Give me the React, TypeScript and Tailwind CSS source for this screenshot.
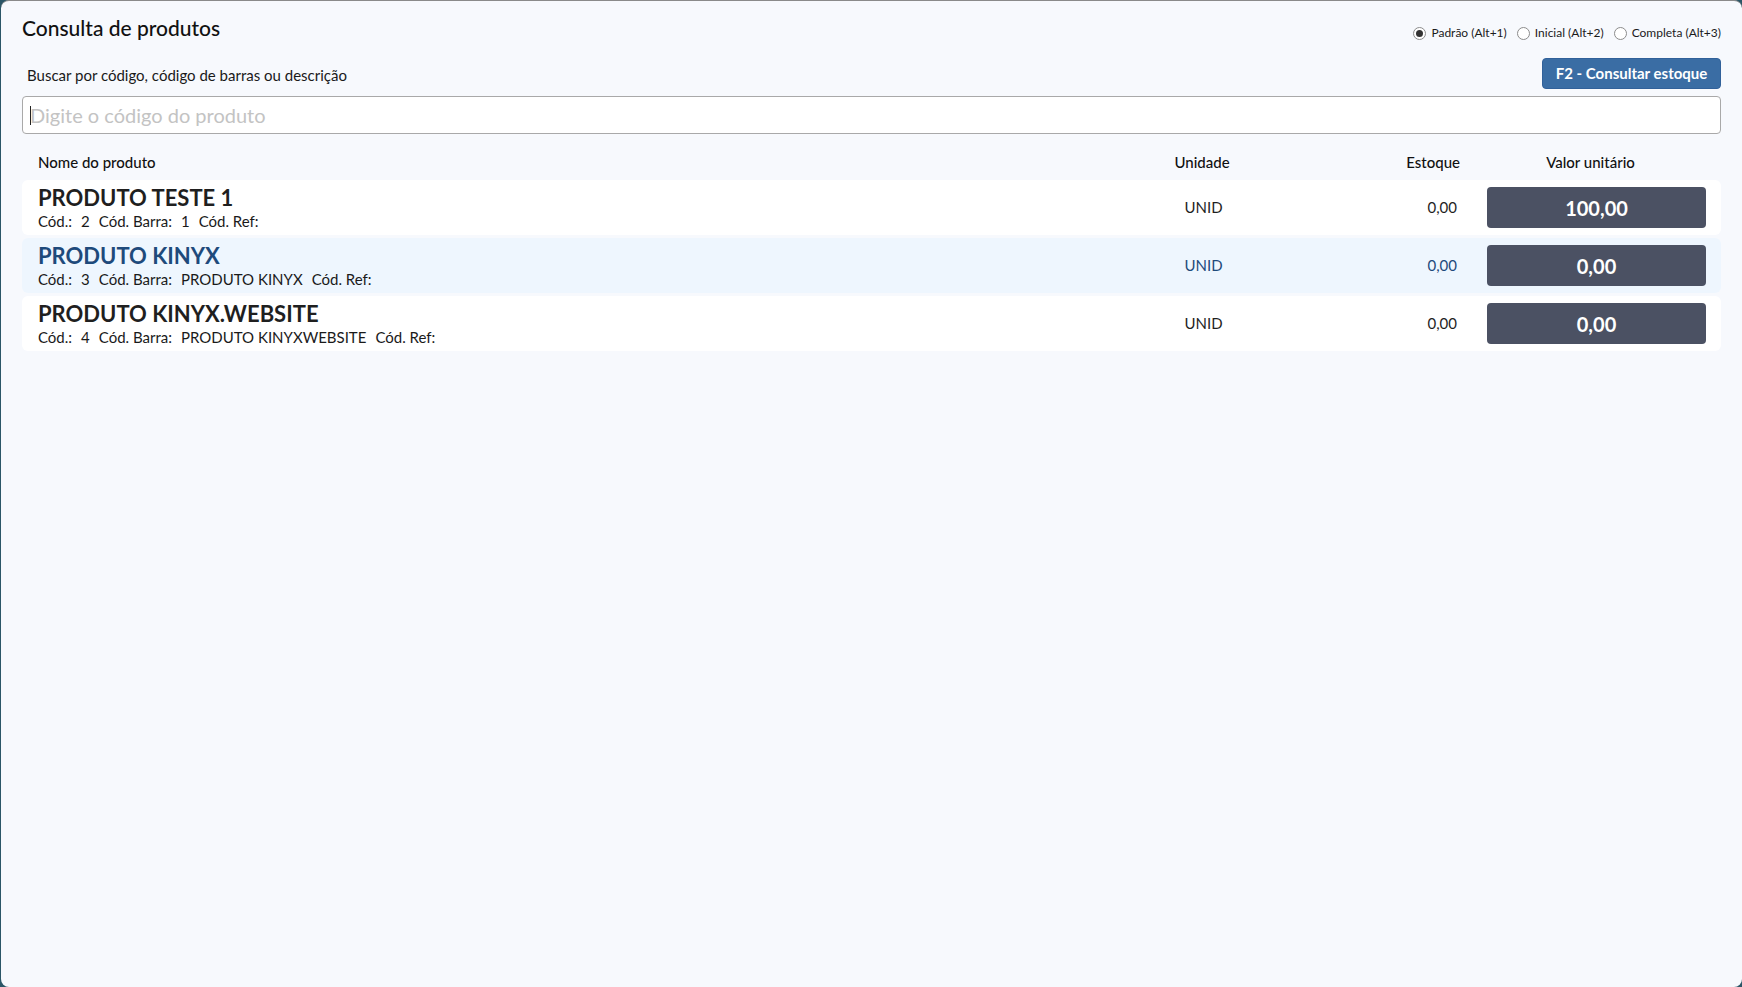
import React from 'react';

interface Produto {
  nome: string;
  cod: string;
  barra: string;
  ref: string;
  unidade: string;
  estoque: string;
  valor: string;
}

const produtos: Produto[] = [
  { nome: 'PRODUTO TESTE 1', cod: '2', barra: '1', ref: '', unidade: 'UNID', estoque: '0,00', valor: '100,00' },
  { nome: 'PRODUTO KINYX', cod: '3', barra: 'PRODUTO KINYX', ref: '', unidade: 'UNID', estoque: '0,00', valor: '0,00' },
  { nome: 'PRODUTO KINYX.WEBSITE', cod: '4', barra: 'PRODUTO KINYXWEBSITE', ref: '', unidade: 'UNID', estoque: '0,00', valor: '0,00' },
];

const Radio: React.FC<{ label: string; checked?: boolean }> = ({ label, checked }) => (
  <label className="flex items-center gap-[5px] text-[12px] text-[#1b1b1b]">
    <span className="w-[13px] h-[13px] rounded-full border border-[#8c8c8c] bg-white flex items-center justify-center">
      {checked && <span className="w-[7px] h-[7px] rounded-full bg-[#333]" />}
    </span>
    {label}
  </label>
);

const ProdutoRow: React.FC<{ p: Produto; selected?: boolean }> = ({ p, selected }) => (
  <div
    className={`h-[55px] rounded-[6px] flex items-center pl-4 pr-[15px] ${
      selected ? 'bg-[#eef6fe] text-[#1e4a7b]' : 'bg-white text-[#1f1f1f]'
    }`}
  >
    <div className="flex-1 flex flex-col">
      <span className="text-[22px] font-bold leading-[26px]">{p.nome}</span>
      <div className="flex gap-[9px] text-[15px] leading-[20px] text-[#1a1a1a]">
        <span>Cód.:</span>
        <span>{p.cod}</span>
        <span>Cód. Barra:</span>
        <span>{p.barra}</span>
        <span>Cód. Ref:</span>
        {p.ref && <span>{p.ref}</span>}
      </div>
    </div>
    <div className="w-[120px] text-center text-[15px] pl-[3px]">{p.unidade}</div>
    <div className="w-[195px] text-right text-[15px]">{p.estoque}</div>
    <div className="ml-[30px] w-[219px] h-[41px] rounded-[4px] bg-[#4b5163] text-white text-[20px] font-bold flex items-center justify-center">
      {p.valor}
    </div>
  </div>
);

export default function App() {
  return (
    <div className="h-[987px] w-full bg-[#2b5667] pl-px font-['Lato','Open_Sans',sans-serif]">
      <div className="h-full bg-[#f7f9fd] rounded-[8px] border-t border-[#8a8a8a] px-[21px] pt-[13px]">
        {/* Título + modos */}
        <div className="flex justify-between items-start">
          <h1 className="text-[21px] leading-[28px] font-medium text-[#111]">Consulta de produtos</h1>
          <div className="flex items-center gap-[10px] mt-[10px]">
            <Radio label="Padrão (Alt+1)" checked />
            <Radio label="Inicial (Alt+2)" />
            <Radio label="Completa (Alt+3)" />
          </div>
        </div>

        {/* Busca */}
        <div className="flex justify-between items-center mt-[16px]">
          <span className="pl-[5px] pt-[3px] text-[15px] text-[#1a1a1a]">Buscar por código, código de barras ou descrição</span>
          <button className="w-[179px] h-[31px] rounded-[4px] bg-[#3a6da4] border border-[#31619a] text-white text-[15px] font-bold">
            F2 - Consultar estoque
          </button>
        </div>
        <div className="relative mt-[7px]">
          <input
            placeholder="Digite o código do produto"
            className="w-full h-[38px] rounded-[4px] border border-[#a9a9a9] bg-white pl-[7px] text-[20px] outline-none placeholder:text-[#c3c3c3]"
          />
          {/* cursor de texto */}
          <span className="absolute left-[8px] top-[10px] w-px h-[19px] bg-[#222]" />
        </div>

        {/* Cabeçalho da tabela */}
        <div className="flex items-center h-[24px] mt-[16px] mb-[6px] pl-4 pr-[15px] text-[15px] font-medium text-[#111]">
          <div className="flex-1">Nome do produto</div>
          <div className="w-[120px] text-center">Unidade</div>
          <div className="w-[198px] text-right">Estoque</div>
          <div className="ml-[27px] w-[219px] text-center pr-[12px]">Valor unitário</div>
        </div>

        <div className="flex flex-col gap-[3px]">
          {produtos.map((p, i) => (
            <ProdutoRow key={i} p={p} selected={i === 1} />
          ))}
        </div>
      </div>
    </div>
  );
}
